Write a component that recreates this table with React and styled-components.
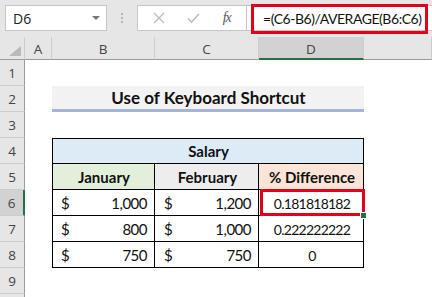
import React from 'react';
import styled, { createGlobalStyle, css } from 'styled-components';

const GlobalStyle = createGlobalStyle`
  html, body {
    margin: 0;
    padding: 0;
    background: #ffffff;
    overflow: hidden;
  }
`;

const CELL_FONT = `Lato, "Liberation Sans", sans-serif`;
const UI_FONT = `"Open Sans", "Noto Sans", sans-serif`;
const GREEN = '#217346';
const RED = '#e3001b';

const Window = styled.div`
  width: 432px;
  height: 297px;
  overflow: hidden;
  background: #e6e6e6;
  display: flex;
  flex-direction: column;
`;

/* ---------- formula bar ---------- */

const Toolbar = styled.div`
  height: 37px;
  flex: none;
  display: flex;
  align-items: flex-start;
  padding: 5px 0 0 5px;
  box-sizing: border-box;
`;

const NameBox = styled.div`
  width: 102px;
  height: 26px;
  box-sizing: border-box;
  background: #fff;
  border: 1px solid #c6c6c6;
  display: flex;
  align-items: center;
  justify-content: space-between;
  padding: 0 6px 0 7px;
  font: 14px ${UI_FONT};
  color: #222;
`;

const Caret = styled.span`
  width: 0;
  height: 0;
  border-left: 4px solid transparent;
  border-right: 4px solid transparent;
  border-top: 4px solid #777;
`;

const Grip = styled.div`
  width: 30px;
  height: 26px;
  display: flex;
  flex-direction: column;
  align-items: center;
  justify-content: center;
  gap: 2px;
  & > span {
    width: 2px;
    height: 2px;
    background: #b5b5b5;
  }
`;

const ButtonBox = styled.div`
  width: 110px;
  height: 26px;
  box-sizing: border-box;
  background: #fff;
  border: 1px solid #c6c6c6;
  display: flex;
  align-items: center;
  justify-content: space-around;
  padding: 0 4px;
`;

const FxLabel = styled.span`
  font: italic 14px "Liberation Serif", serif;
  color: #555;
  letter-spacing: -1px;
`;

const FormulaInput = styled.div`
  flex: 1;
  height: 26px;
  box-sizing: border-box;
  background: #fff;
  border-top: 1px solid #c6c6c6;
  border-bottom: 1px solid #c6c6c6;
  position: relative;
  display: flex;
  align-items: center;
  padding-left: 16px;
  white-space: nowrap;
  font: 14px ${CELL_FONT};
  letter-spacing: -0.45px;
  color: #111;
`;

const Highlight = styled.div`
  position: absolute;
  border: 3px solid ${RED};
  box-sizing: border-box;
  pointer-events: none;
  ${(p) => css`
    left: ${p.$l}px;
    top: ${p.$t}px;
    right: ${p.$r}px;
    bottom: ${p.$b}px;
  `}
`;

/* ---------- sheet ---------- */

const Sheet = styled.div`
  flex: none;
  display: grid;
  grid-template-columns: 25px 27px 103px 104px 105px 1fr;
  grid-template-rows: 23px repeat(10, 26px);
  background: #fff;
`;

const Header = styled.div`
  background: ${(p) => (p.$active ? '#d2d2d2' : '#e6e6e6')};
  display: flex;
  align-items: center;
  justify-content: center;
  font: 13.5px ${UI_FONT};
  color: #444;
  box-sizing: border-box;
  position: relative;
  ${(p) =>
    p.$col &&
    css`
      border-right: 1px solid #cdcdcd;
      border-bottom: 1px solid #9b9b9b;
      padding-top: 2px;
    `}
  ${(p) =>
    p.$col &&
    p.$active &&
    css`
      border-bottom: 2px solid ${GREEN};
    `}
  ${(p) =>
    p.$row &&
    css`
      grid-column: 1;
      grid-row: ${p.$at};
      border-bottom: 1px solid #cdcdcd;
      border-right: 1px solid #9b9b9b;
    `}
  ${(p) =>
    p.$row &&
    p.$active &&
    css`
      border-right: 2px solid ${GREEN};
    `}
`;

const Corner = styled(Header)`
  border-right: 1px solid #cdcdcd;
  border-bottom: 1px solid #9b9b9b;
  &::after {
    content: '';
    position: absolute;
    right: 3px;
    bottom: 3px;
    border-left: 12px solid transparent;
    border-bottom: 10px solid #b9b9b9;
  }
`;

const Cell = styled.div`
  grid-column: ${(p) => p.$col} / span ${(p) => p.$span || 1};
  grid-row: ${(p) => p.$row};
  background: ${(p) => p.$bg || '#fff'};
  font: ${(p) => (p.$bold ? 'bold 15px' : '14px')} ${CELL_FONT};
  letter-spacing: ${(p) => (p.$bold ? '0' : '-0.75px')};
  color: #111;
  display: flex;
  align-items: center;
  justify-content: ${(p) => p.$align || 'center'};
  padding: 0 8px 0 9px;
  box-sizing: border-box;
  position: relative;
  white-space: nowrap;
  ${(p) =>
    p.$boxed &&
    css`
      box-shadow: inset -1px -1px 0 #000
        ${p.$top ? ', inset 0 1px 0 #000' : ''}
        ${p.$left ? ', inset 1px 0 0 #000' : ''};
    `}
`;

const Title = styled(Cell)`
  font: bold 17px ${CELL_FONT};
  letter-spacing: 0;
  background: #f2f2f2;
  border-bottom: 3px solid #a6b5d5;
  color: #111;
`;

const Money = styled.span`
  flex: 1;
  display: flex;
  justify-content: space-between;
  font-size: 15px;
  letter-spacing: -0.5px;
`;

const FillHandle = styled.span`
  position: absolute;
  right: -3px;
  bottom: -3px;
  width: 5px;
  height: 5px;
  background: ${GREEN};
  border: 1px solid #fff;
  z-index: 2;
`;

const rows = [
  { jan: '1,000', feb: '1,200', diff: '0.181818182' },
  { jan: '800', feb: '1,000', diff: '0.222222222' },
  { jan: '750', feb: '750', diff: '0' },
];

function Amount({ value, col, row }) {
  return (
    <Cell $col={col} $row={row} $boxed $left={col === 3}>
      <Money>
        <span>$</span>
        <span>{value}</span>
      </Money>
    </Cell>
  );
}

export default function App() {
  const columns = ['A', 'B', 'C', 'D', ''];
  return (
    <Window>
      <GlobalStyle />
      <Toolbar>
        <NameBox>
          D6
          <Caret />
        </NameBox>
        <Grip>
          <span />
          <span />
          <span />
        </Grip>
        <ButtonBox>
          <svg width="12" height="12" viewBox="0 0 12 12">
            <path d="M1 1 L11 11 M11 1 L1 11" stroke="#bdbdbd" strokeWidth="1.4" fill="none" />
          </svg>
          <svg width="13" height="12" viewBox="0 0 13 12">
            <path d="M1 6.5 L4.5 10 L12 2" stroke="#bdbdbd" strokeWidth="1.6" fill="none" />
          </svg>
          <FxLabel>fx</FxLabel>
        </ButtonBox>
        <FormulaInput>
          =(C6-B6)/AVERAGE(B6:C6)
          <Highlight $l={4} $t={-2} $r={4} $b={-4} />
        </FormulaInput>
      </Toolbar>
      <Sheet>
        <Corner />
        {columns.map((c, i) => (
          <Header key={i} $col $active={c === 'D'}>
            {c}
          </Header>
        ))}
        {/* tenth row only peeks in at the bottom edge, so no label */}
        {Array.from({ length: 10 }, (_, i) => (
          <Header key={`r${i}`} $row $at={i + 2} $active={i + 1 === 6}>
            {i < 9 ? i + 1 : ''}
          </Header>
        ))}

        <Title $col={3} $row={3} $span={3}>
          Use of Keyboard Shortcut
        </Title>

        <Cell $col={3} $row={5} $span={3} $bg="#ddebf7" $bold $boxed $top $left>
          Salary
        </Cell>
        <Cell $col={3} $row={6} $bg="#e2efda" $bold $boxed $left>
          January
        </Cell>
        <Cell $col={4} $row={6} $bg="#ededed" $bold $boxed>
          February
        </Cell>
        <Cell $col={5} $row={6} $bg="#fce4d6" $bold $boxed>
          % Difference
        </Cell>

        {rows.map((r, i) => (
          <React.Fragment key={i}>
            <Amount value={r.jan} col={3} row={7 + i} />
            <Amount value={r.feb} col={4} row={7 + i} />
            <Cell $col={5} $row={7 + i} $boxed>
              {r.diff}
              {i === 0 && (
                <>
                  <Highlight $l={1} $t={-1} $r={-1} $b={0} />
                  <FillHandle />
                </>
              )}
            </Cell>
          </React.Fragment>
        ))}
      </Sheet>
    </Window>
  );
}
